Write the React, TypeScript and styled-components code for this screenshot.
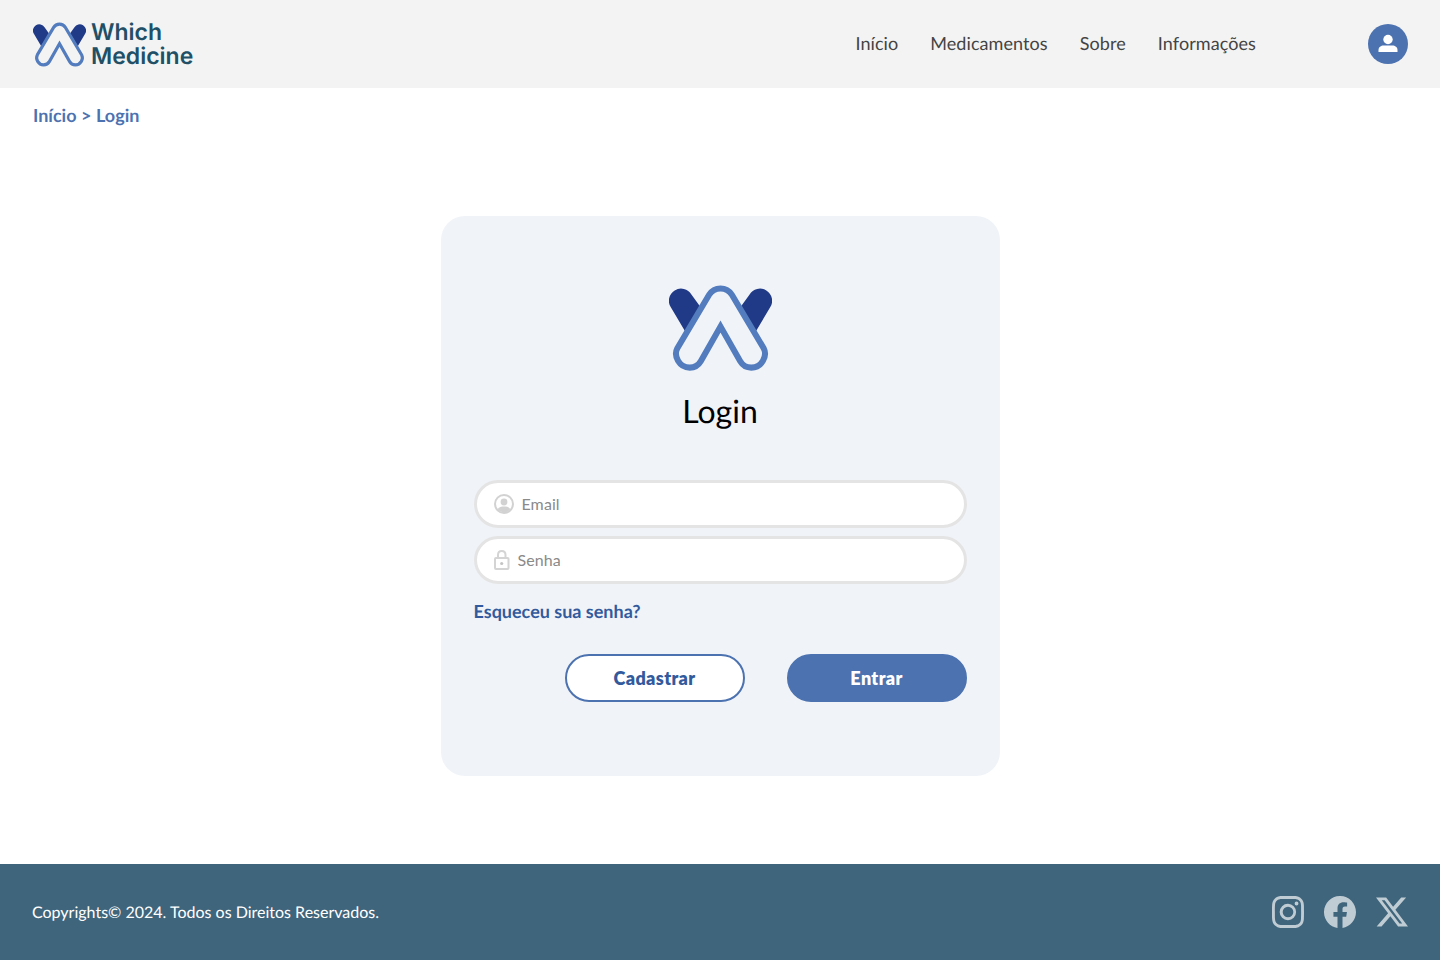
import styled, { createGlobalStyle } from 'styled-components';
import { BsInstagram, BsFacebook, BsTwitterX } from 'react-icons/bs';

const GlobalStyle = createGlobalStyle`
  * { box-sizing: border-box; }
  html, body { margin: 0; padding: 0; background: #fff; }
  body { font-family: Lato, "Open Sans", sans-serif; text-rendering: geometricPrecision; }
`;

const Page = styled.div`
  display: flex;
  flex-direction: column;
  min-height: 960px;
`;

const Header = styled.header`
  height: 88px;
  background: #f3f3f3;
  display: flex;
  align-items: center;
  padding: 0 32px 0 33px;
`;

const Brand = styled.a`
  display: flex;
  align-items: center;
  gap: 5px;
`;

const BrandName = styled.span`
  font-family: Inter, sans-serif;
  font-size: 23px;
  line-height: 24px;
  font-weight: 600;
  color: #215066;
`;

const Nav = styled.nav`
  display: flex;
  gap: 32px;
  margin-left: auto;
  margin-right: 112px;
  padding-bottom: 3px;
`;

const NavLink = styled.a`
  font-size: 18px;
  letter-spacing: 0.08px;
  color: #444;
`;

const Avatar = styled.div`
  width: 40px;
  height: 40px;
  border-radius: 50%;
  background: #4c72b0;
  display: flex;
  align-items: center;
  justify-content: center;
`;

const Main = styled.main`
  flex: 1;
  display: flex;
  flex-direction: column;
  align-items: center;
`;

const Breadcrumb = styled.div`
  align-self: flex-start;
  height: 56px;
  padding: 16px 0 0 33px;
  font-size: 18px;
  line-height: 22px;
  font-weight: 700;
  color: #4c72b0;
  display: flex;
  gap: 4.5px;
`;

const Card = styled.section`
  width: 559px;
  height: 560px;
  margin-top: 72px;
  margin-bottom: 88px;
  background: #f0f3f8;
  border-radius: 24px;
  padding: 69px 33px 0;
  display: flex;
  flex-direction: column;
  align-items: center;
`;

const LogoWrap = styled.div`
  height: 86px;
  line-height: 0;
`;

const Title = styled.h1`
  margin: 19px 0 48px;
  font-size: 32px;
  line-height: 42px;
  font-weight: 400;
  color: #000;
`;

const Field = styled.label`
  width: 100%;
  height: 48px;
  margin-bottom: 8px;
  border: 3px solid #e4e4e4;
  border-radius: 24px;
  background: #fff;
  display: flex;
  align-items: center;
  gap: 8px;
  padding-left: 17px;
`;

const Input = styled.input`
  flex: 1;
  border: 0;
  outline: 0;
  background: transparent;
  font-family: Lato, sans-serif;
  font-size: 16px;
  letter-spacing: 0.1px;
  line-height: 20px;
  padding: 0;
  color: #444;
  &::placeholder { color: #8a8a8a; opacity: 1; }
`;

const Forgot = styled.a`
  align-self: flex-start;
  margin-top: 7px;
  font-size: 18px;
  line-height: 24px;
  font-weight: 700;
  color: #325a9c;
`;

const Actions = styled.div`
  align-self: stretch;
  display: flex;
  justify-content: flex-end;
  gap: 42px;
  margin-top: 31px;
`;

const Button = styled.button<{ $primary?: boolean }>`
  width: 180px;
  height: 48px;
  border-radius: 24px;
  border: 2px solid #4c72b0;
  background: ${p => (p.$primary ? '#4c72b0' : '#fff')};
  color: ${p => (p.$primary ? '#fff' : '#325a9c')};
  font-family: Lato, sans-serif;
  font-size: 18px;
  font-weight: 800;
  letter-spacing: 0.35px;
`;

const Footer = styled.footer`
  height: 96px;
  background: #3f657c;
  display: flex;
  align-items: center;
  justify-content: space-between;
  padding: 0 32px;
`;

const Copy = styled.span`
  font-size: 16px;
  color: #fff;
`;

const Socials = styled.div`
  display: flex;
  gap: 20px;
  color: #c0ccd3;
  line-height: 0;
`;

const Logo = ({ width, height }: { width: number; height: number }) => (
  <svg width={width} height={height} viewBox="57 45 308 255" fill="none">
    <path d="M105 182 L62 110 A36 36 0 0 1 124 72 L150 108 Z" fill="#203a87" />
    <path d="M317 182 L360 110 A36 36 0 0 0 298 72 L272 108 Z" fill="#203a87" />
    <path
      d="M82 233 L177 73 A40 40 0 0 1 245 73 L340 233 C352 256 335 291 303 291 C288 291 277 284 270 272 L211 168 L152 272 C145 284 134 291 119 291 C87 291 70 256 82 233 Z"
      stroke="#527cbd"
      strokeWidth="18"
      strokeLinejoin="miter"
    />
  </svg>
);

const UserIcon = () => (
  <svg width="20" height="20" viewBox="0 0 20 20" fill="#fff">
    <circle cx="10" cy="5.5" r="4.7" />
    <path d="M0.5 18 V16 C0.5 13 3 11.5 5.5 11.5 H14.5 C17 11.5 19.5 13 19.5 16 V18 Z" />
  </svg>
);

const EmailIcon = () => (
  <svg width="20" height="20" viewBox="0 0 20 20">
    <circle cx="10" cy="10" r="9" fill="#fff" stroke="#d2d2d2" strokeWidth="2" />
    <circle cx="10" cy="8" r="3.4" fill="#d2d2d2" />
    <path d="M3.6 15.2 C5 12.9 7.5 12.6 10 12.6 C12.5 12.6 15 12.9 16.4 15.2 C14.8 17.1 12.5 18.2 10 18.2 C7.5 18.2 5.2 17.1 3.6 15.2 Z" fill="#d2d2d2" />
  </svg>
);

const LockIcon = () => (
  <svg width="16" height="20" viewBox="0 0 16 20" fill="none" stroke="#d4d4d4" strokeWidth="2">
    <rect x="1" y="8" width="13.5" height="11" rx="1" />
    <path d="M4 8 V5 C4 2.6 5.5 1 7.7 1 C10 1 11.5 2.6 11.5 5 V8" />
    <circle cx="7.7" cy="13.5" r="1.6" fill="#c4c4c4" stroke="none" />
  </svg>
);

export default function App() {
  return (
    <Page>
      <GlobalStyle />
      <Header>
        <Brand>
          <Logo width={53} height={45} />
          <BrandName>Which<br />Medicine</BrandName>
        </Brand>
        <Nav>
          <NavLink>Início</NavLink>
          <NavLink>Medicamentos</NavLink>
          <NavLink>Sobre</NavLink>
          <NavLink>Informações</NavLink>
        </Nav>
        <Avatar><UserIcon /></Avatar>
      </Header>
      <Main>
        <Breadcrumb>
          <span>Início</span>
          <span>&gt;</span>
          <span>Login</span>
        </Breadcrumb>
        <Card>
          <LogoWrap><Logo width={103} height={86} /></LogoWrap>
          <Title>Login</Title>
          <Field>
            <EmailIcon />
            <Input placeholder="Email" />
          </Field>
          <Field>
            <LockIcon />
            <Input placeholder="Senha" type="password" />
          </Field>
          <Forgot>Esqueceu sua senha?</Forgot>
          <Actions>
            <Button>Cadastrar</Button>
            <Button $primary>Entrar</Button>
          </Actions>
        </Card>
      </Main>
      <Footer>
        <Copy>Copyrights© 2024. Todos os Direitos Reservados.</Copy>
        <Socials>
          <BsInstagram size={32} />
          <BsFacebook size={32} />
          <BsTwitterX size={32} />
        </Socials>
      </Footer>
    </Page>
  );
}
